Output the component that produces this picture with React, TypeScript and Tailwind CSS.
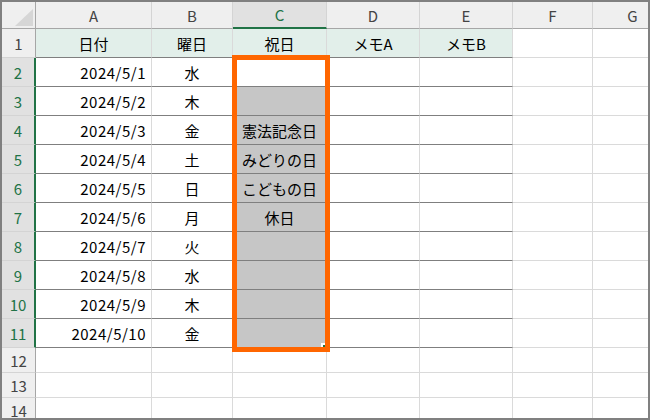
import React from "react";

const cols = ["A", "B", "C", "D", "E", "F", "G"];

const rows: string[][] = [
  ["日付", "曜日", "祝日", "メモA", "メモB"],
  ["2024/5/1", "水", ""],
  ["2024/5/2", "木", ""],
  ["2024/5/3", "金", "憲法記念日"],
  ["2024/5/4", "土", "みどりの日"],
  ["2024/5/5", "日", "こどもの日"],
  ["2024/5/6", "月", "休日"],
  ["2024/5/7", "火", ""],
  ["2024/5/8", "水", ""],
  ["2024/5/9", "木", ""],
  ["2024/5/10", "金", ""],
  [],
  [],
  [],
];

function Corner() {
  return (
    <div className="h-[27px] bg-[#efefef] border-r border-b border-[#a6a6a6] flex items-end justify-end pr-[2px] pb-[2px]">
      <svg width="18" height="17" viewBox="0 0 18 17">
        <polygon points="0,17 18,17 18,0" fill="#d6d6d6" />
      </svg>
    </div>
  );
}

function ColHeader({ label }: { label: string }) {
  const active = label === "C";
  return (
    <div
      className={
        active
          ? "h-[27px] bg-[#e1e1e1] border-r border-r-[#d4d4d4] border-b-2 border-b-[#217346] text-[#217346] flex items-center justify-center"
          : "h-[27px] bg-[#efefef] border-r border-r-[#d4d4d4] border-b border-b-[#a6a6a6] text-[#444] flex items-center justify-center"
      }
    >
      {label}
    </div>
  );
}

function RowHeader({ n }: { n: number }) {
  const active = n >= 2 && n <= 11;
  const h = n <= 11 ? "h-[29px]" : "h-[25px]";
  return (
    <div
      className={
        active
          ? `${h} bg-[#e1e1e1] text-[#217346] border-r-2 border-r-[#217346] border-b border-b-[#d4d4d4] flex items-center justify-center`
          : `${h} bg-[#efefef] text-[#444] border-r border-r-[#a6a6a6] border-b border-b-[#d4d4d4] flex items-center justify-center`
      }
    >
      {n}
    </div>
  );
}

function Cell({ r, c, text }: { r: number; c: number; text?: string }) {
  const inTable = r <= 11 && c <= 4;
  const h = r <= 11 ? "h-[29px]" : "h-[25px]";
  let bg = "bg-white";
  if (r === 1 && c <= 4) bg = "bg-[#e2efea]";
  if (c === 2 && r >= 3 && r <= 11) bg = "bg-[#c6c6c6]";
  const bottom = inTable ? "border-b-[#7f7f7f]" : "border-b-[#dadada]";
  const align =
    c === 0 && r >= 2 ? "justify-end pr-[5px] tracking-[0.5px]" : "justify-center";
  return (
    <div
      className={`${h} ${bg} border-r border-r-[#dadada] border-b ${bottom} flex items-center ${align} text-black`}
    >
      {text}
    </div>
  );
}

export default function App() {
  return (
    <div className="relative w-[650px] h-[420px] overflow-hidden border-2 border-[#808080] bg-white font-['Noto_Sans_CJK_JP',sans-serif] text-[15px] leading-none">
      <div className="grid grid-cols-[34px_116px_81px_94px_93px_93px_80px_80px] w-max">
        <Corner />
        {cols.map((c) => (
          <ColHeader key={c} label={c} />
        ))}
        {rows.map((row, i) => (
          <React.Fragment key={i}>
            <RowHeader n={i + 1} />
            {cols.map((_, c) => (
              <Cell key={c} r={i + 1} c={c} text={row[c]} />
            ))}
          </React.Fragment>
        ))}
      </div>
      <div className="absolute left-[230px] top-[53px] w-[98px] h-[297px] border-[5px] border-[#ff6600]">
        <div className="absolute right-0 bottom-0 w-[4px] h-[4px] bg-white">
          <div className="absolute right-0 bottom-0 w-[2px] h-[2px] bg-[#217346]" />
        </div>
      </div>
    </div>
  );
}
